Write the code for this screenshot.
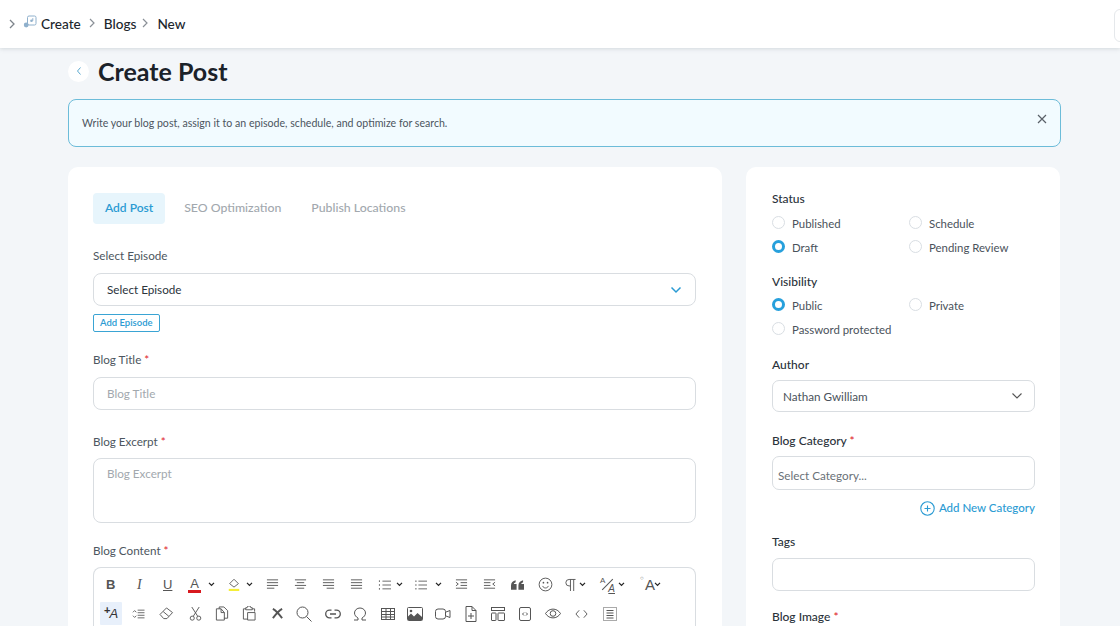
<script>
</script>

<div class="page">
  <header class="top">
    <svg class="crumb-first" width="8" height="10" viewBox="0 0 8 10"><path d="M2 1l4 4-4 4" /></svg>
    <svg class="music" width="14" height="14" viewBox="0 0 14 14"><rect x="4.5" y="1" width="8.5" height="9" rx="1.5"/><circle cx="3.2" cy="10" r="2.4" class="fill"/><circle cx="8.5" cy="5.8" r="1.3" class="fill"/><path d="M9.8 5.8V3.2"/></svg>
    <span class="crumb">Create</span>
    <svg class="sep" width="8" height="10" viewBox="0 0 8 10"><path d="M2 1l4 4-4 4" /></svg>
    <span class="crumb">Blogs</span>
    <svg class="sep s2" width="8" height="10" viewBox="0 0 8 10"><path d="M2 1l4 4-4 4" /></svg>
    <span class="crumb">New</span>
    <div class="top-box"></div>
  </header>

  <main class="content">
    <div class="title-row">
      <button class="back" aria-label="Back"><svg width="8" height="10" viewBox="0 0 8 10"><path d="M5.5 1.5L2.5 5l3 3.5"/></svg></button>
      <h1>Create Post</h1>
    </div>

    <div class="notice">
      <span>Write your blog post, assign it to an episode, schedule, and optimize for search.</span>
      <svg width="10" height="10" viewBox="0 0 10 10"><path d="M1 1l8 8M9 1L1 9"/></svg>
    </div>

    <div class="columns">
      <section class="card left">
        <div class="tabs">
          <span class="tab active">Add Post</span>
          <span class="tab">SEO Optimization</span>
          <span class="tab">Publish Locations</span>
        </div>

        <div class="lbl first">Select Episode</div>
        <div class="field select">
          <span>Select Episode</span>
          <svg width="12" height="8" viewBox="0 0 12 8"><path d="M1.5 1.5L6 6l4.5-4.5"/></svg>
        </div>
        <div class="add-ep">Add Episode</div>

        <div class="lbl title-lbl">Blog Title <i>*</i></div>
        <div class="field ph">Blog Title</div>

        <div class="lbl excerpt-lbl">Blog Excerpt <i>*</i></div>
        <div class="field ph area">Blog Excerpt</div>

        <div class="lbl content-lbl">Blog Content <i>*</i></div>
        <div class="editor">
          <div class="tool-row r1">
            <b class="tb t-b">B</b>
            <em class="tb t-i">I</em>
            <u class="tb t-u">U</u>
            <span class="tb color"><span class="a">A</span><span class="bar red"></span></span>
            <svg class="caret" viewBox="0 0 8 6"><path d="M1 1l3 3 3-3"/></svg>
            <svg class="ic fillbucket" viewBox="0 0 16 16"><path d="M8 2l5 5-5 4-5-4z"/><rect x="2" y="13" width="12" height="2.4" class="yellow"/></svg>
            <svg class="caret c2" viewBox="0 0 8 6"><path d="M1 1l3 3 3-3"/></svg>
            <svg class="ic al a1" viewBox="0 0 14 14"><path d="M1 2h12M1 5h12M1 8h12M1 11h8"/></svg>
            <svg class="ic al" viewBox="0 0 14 14"><path d="M1 2h12M3 5h8M1 8h12M3 11h8"/></svg>
            <svg class="ic al" viewBox="0 0 14 14"><path d="M1 2h12M1 5h12M1 8h12M5 11h8"/></svg>
            <svg class="ic al" viewBox="0 0 14 14"><path d="M1 2h12M1 5h12M1 8h12M1 11h12"/></svg>
            <svg class="ic list" viewBox="0 0 16 14"><path d="M5 2.5h10M5 7h10M5 11.5h10M1.5 1.5v2M1.5 6v2M1.5 10.5v2"/></svg>
            <svg class="caret" viewBox="0 0 8 6"><path d="M1 1l3 3 3-3"/></svg>
            <svg class="ic list ul" viewBox="0 0 16 14"><path d="M5 2.5h10M5 7h10M5 11.5h10M1 2.5h2M1 7h2M1 11.5h2"/></svg>
            <svg class="caret" viewBox="0 0 8 6"><path d="M1 1l3 3 3-3"/></svg>
            <svg class="ic al ind" viewBox="0 0 14 14"><path d="M1 2h12M6 5h7M6 8h7M1 11h12M1 4.5L3.5 6.500 1 8.500"/></svg>
            <svg class="ic al ind2" viewBox="0 0 14 14"><path d="M1 2h12M1 5h7M1 8h7M1 11h12M13 4.500L10.500 6.500 13 8.500"/></svg>
            <svg class="ic quote" viewBox="0 0 14 10"><path d="M0 10V5.500C0 2.500 2 .8 5 0v2C3.800 2.500 3.200 3.200 3 4h3v6zM8 10V5.500C8 2.500 10 .8 13 0v2c-1.200.5-1.800 1.200-2 2h3v6z"/></svg>
            <svg class="ic smile" viewBox="0 0 16 16"><circle cx="8" cy="8" r="6.800"/><path d="M4.800 9.500c.8 1.500 1.900 2.200 3.200 2.200s2.400-.7 3.200-2.200"/><circle cx="5.800" cy="6" r=".9" class="dot"/><circle cx="10.200" cy="6" r=".9" class="dot"/></svg>
            <svg class="ic pil" viewBox="0 0 13 15"><path d="M7 14V1.500M10.500 14V1.500M12.500 1.500H5.500a3.500 3.500 0 0 0 0 7H7"/></svg>
            <svg class="caret" viewBox="0 0 8 6"><path d="M1 1l3 3 3-3"/></svg>
            <span class="tb ratio"><span class="small">A</span><span class="slash"></span><span class="big">A</span></span>
            <svg class="caret" viewBox="0 0 8 6"><path d="M1 1l3 3 3-3"/></svg>
            <span class="tb deg"><span class="sm">○</span>A</span>
            <svg class="caret" viewBox="0 0 8 6"><path d="M1 1l3 3 3-3"/></svg>
          </div>
          <div class="tool-row r2">
            <span class="tb plusa"><span>+</span><em>A</em></span>
            <svg class="ic lh" viewBox="0 0 16 14"><path d="M7 2.500h8M7 5.500h8M7 8.500h8M7 11.500h8M1.500 5L3.500 3l2 2M1.500 9l2 2 2-2"/></svg>
            <svg class="ic eraser" viewBox="0 0 16 14"><path d="M1 8l7-7 6.500 5-6 6.500H5zM4.500 5l6 5"/></svg>
            <svg class="ic cut" viewBox="0 0 14 16"><circle cx="3.500" cy="13" r="2.200"/><circle cx="10.500" cy="13" r="2.200"/><path d="M4.600 11L11 1M9.400 11L3 1"/></svg>
            <svg class="ic copy" viewBox="0 0 14 16"><path d="M4 3V1h5l4 4v8h-4M1 3h5l3.500 4v8H1zM6 3v4h3.500"/></svg>
            <svg class="ic paste" viewBox="0 0 15 16"><path d="M4 3H1.500v11H6M11 3h2.500v3M4 4V1.800h1.500a2 2 0 0 1 4 0H11V4zM6 7h8v8H6z"/></svg>
            <svg class="ic xx" viewBox="0 0 14 14"><path d="M2 2c4 2 7 6 10 10M12 2C8 4 5 8 2 12" /></svg>
            <svg class="ic search" viewBox="0 0 16 16"><circle cx="6.500" cy="6.500" r="5.500"/><path d="M10.500 10.500L15.500 15.500"/></svg>
            <svg class="ic link" viewBox="0 0 16 10"><path d="M6.500 1.200H4.500a3.800 3.800 0 0 0 0 7.600h2M9.500 1.200h2a3.800 3.800 0 0 1 0 7.600h-2M5 5h6"/></svg>
            <svg class="ic omega" viewBox="0 0 14 14"><path d="M1 13h4v-2C3 10 1.500 8 1.500 6a5.500 5 0 0 1 11 0c0 2-1.500 4-3.500 5v2h4"/></svg>
            <svg class="ic table" viewBox="0 0 14 12"><rect x=".5" y=".5" width="13" height="11"/><path d="M.5 3.500h13M.5 6.500h13M.5 9h13M5 .5v11M9.500 .5v11"/></svg>
            <svg class="ic image" viewBox="0 0 16 14"><rect x=".5" y=".5" width="15" height="13" rx="1"/><path class="solid" d="M1 13V9.500l3-3 3 3 3.500-3.500L15 10v3z"/><circle cx="4" cy="4" r="1.300" class="solid"/></svg>
            <svg class="ic video" viewBox="0 0 16 12"><rect x=".5" y="1" width="10" height="10" rx="2.500"/><path d="M11 4l4-1.500v7L11 8"/></svg>
            <svg class="ic doc" viewBox="0 0 12 16"><path d="M7 .5H1v15h10V4.500zM7 .5v4h4M6 7v6M3 10h6"/></svg>
            <svg class="ic layout" viewBox="0 0 14 14"><rect x=".5" y=".5" width="13" height="3"/><rect x=".5" y="6" width="4.500" height="7.500" rx=".5"/><rect x="7" y="6" width="6.500" height="7.500" rx=".5"/></svg>
            <svg class="ic embed" viewBox="0 0 12 14"><rect x=".5" y=".5" width="11" height="13" rx="1.500"/><path d="M5 5.500L3.500 7 5 8.500M7 5.500L8.500 7 7 8.500"/></svg>
            <svg class="ic eye" viewBox="0 0 16 10"><path d="M.5 5C2.500 2 5 .6 8 .6S13.500 2 15.500 5c-2 3-4.500 4.400-7.500 4.400S2.500 8 .5 5z"/><circle cx="8" cy="5" r="2.800"/></svg>
            <svg class="ic code" viewBox="0 0 14 10"><path d="M4.500 1L1 5l3.500 4M9.500 1L13 5 9.500 9"/></svg>
            <svg class="ic blocks" viewBox="0 0 14 14"><rect x=".5" y=".5" width="13" height="13" stroke-dasharray="1 1"/><path d="M3.500 3.500h7M3.500 6h7M3.500 8.500h7M3.500 11h7"/></svg>
          </div>
        </div>
      </section>

      <aside class="card right">
        <div class="rt-lbl">Status</div>
        <div class="radios">
          <label class="radio"><span class="dot"></span>Published</label>
          <label class="radio"><span class="dot"></span>Schedule</label>
          <label class="radio"><span class="dot on"></span>Draft</label>
          <label class="radio"><span class="dot"></span>Pending Review</label>
        </div>
        <div class="rt-lbl vis">Visibility</div>
        <div class="radios vis-radios">
          <label class="radio"><span class="dot on"></span>Public</label>
          <label class="radio"><span class="dot"></span>Private</label>
          <label class="radio wide"><span class="dot"></span>Password protected</label>
        </div>
        <div class="rt-lbl author">Author</div>
        <div class="rfield author-sel">
          <span>Nathan Gwilliam</span>
          <svg width="12" height="8" viewBox="0 0 12 8"><path d="M1.500 1.500L6 6l4.500-4.500"/></svg>
        </div>
        <div class="rt-lbl cat">Blog Category <i>*</i></div>
        <div class="rfield cat-sel">Select Category...</div>
        <div class="add-cat">
          <svg width="15" height="15" viewBox="0 0 15 15"><circle cx="7.500" cy="7.500" r="6.700"/><path d="M7.500 4.500v6M4.500 7.500h6"/></svg>
          Add New Category
        </div>
        <div class="rt-lbl tags">Tags</div>
        <div class="rfield tag-box"></div>
        <div class="rt-lbl img">Blog Image <i>*</i></div>
      </aside>
    </div>
  </main>
</div>

<style>
  :global(body) { margin: 0; background: #f3f6f9; }
  .page { width: 1120px; height: 626px; overflow: hidden; font-family: "Lato", "Inter", sans-serif; color: #212b36; background: #f3f6f9; }
  svg { fill: none; stroke: currentColor; display: block; flex: none; }

  .top { height: 48px; background: #fff; box-shadow: 0 1px 4px rgba(120,130,140,.25); display: flex; align-items: center; position: relative; padding-left: 8px; box-sizing: border-box; }
  .crumb-first { color: #7d848b; stroke-width: 1.300; margin-right: 7px; }
  .music { color: #8fb0cc; margin: -4px 4px 0 0; }
  .music .fill { fill: #8fb0cc; stroke: none; }
  .crumb { font-size: 13.600px; font-weight: 500; color: #20262d; }
  .sep { color: #8a9097; margin: -3px 8px 0 7px; stroke-width: 1.200; }
  .sep.s2 { margin-left: 5px; }
  .top-box { position: absolute; right: -26px; top: 9px; width: 30px; height: 31px; border: 1px solid #e5e8eb; border-radius: 6px; }

  .content { padding: 0 59px 0 68px; }
  .title-row { display: flex; align-items: center; height: 48px; margin-top: -1px; }
  .back { width: 21px; height: 21px; border: 0; padding: 0; border-radius: 50%; background: #fff; display: flex; align-items: center; justify-content: center; color: #5aa9cf; margin: 0 9px 0 0; }
  h1 { margin: 0; font-size: 25px; font-weight: 700; color: #1b2229; line-height: 48px; }

  .notice { height: 48px; box-sizing: border-box; margin: 4px 0 0; border: 1.500px solid #6cbcd9; border-radius: 8px; background: #f2fbff; display: flex; align-items: center; justify-content: space-between; padding: 0 13px 0 13px; font-size: 10.600px; color: #4c5560; }
  .notice span { margin-top: -1px; }
  .notice svg { color: #5a6068; stroke-width: 1.200; margin-top: -9px; }

  .columns { display: flex; gap: 24px; margin-top: 20px; align-items: flex-start; }
  .card { background: #fff; border-radius: 10px; box-sizing: border-box; height: 520px; }
  .left { width: 654px; padding: 26px 26px 0 25px; flex: none; }
  .right { width: 314px; padding: 24px 25px 0 26px; flex: none; }

  .tabs { display: flex; gap: 0; align-items: center; height: 31px; }
  .tab { font-size: 12.300px; font-weight: 500; color: #a2a8ae; margin-right: 30px; line-height: 29px; height: 31px; }
  .tab.active { background: #e7f5fc; color: #2b9bd3; border-radius: 4px; padding: 0 12px; margin-right: 19px; font-weight: 600; font-size: 12px; }

  .lbl { font-size: 11.700px; color: #4d5660; line-height: 16px; }
  .lbl i, .rt-lbl i { color: #e0242b; font-style: normal; }
  .lbl.first { margin-top: 23px; }
  .field { border: 1px solid #d9dde1; border-radius: 8px; box-sizing: border-box; margin-top: 10px; font-size: 11.700px; }
  .select { height: 33px; display: flex; align-items: center; justify-content: space-between; padding: 0 13px; color: #2c343c; }
  .select span { margin-top: -1px; }
  .select svg { color: #2b9bd3; stroke-width: 1.500; }
  .add-ep { display: inline-block; margin-top: 8px; border: 1px solid #3aa4d4; border-radius: 2px; color: #2b9bd3; font-size: 9.500px; font-weight: 600; line-height: 16px; padding: 0 6px; }
  .title-lbl { margin-top: 19px; }
  .ph { height: 33px; color: #a2a8ae; padding: 0 13px; line-height: 30px; }
  .excerpt-lbl { margin-top: 23px; }
  .area { height: 65px; line-height: 16px; padding-top: 6px; margin-top: 9px; }
  .content-lbl { margin-top: 19px; }
  .editor { margin-top: 9px; border: 1px solid #d9dde1; border-bottom: 0; border-radius: 8px 8px 0 0; height: 80px; box-sizing: border-box; padding: 0 5px; color: #555; }

  .tool-row { display: flex; align-items: center; height: 29px; }
  .r1 { margin-top: 2px; }
  .ic { color: #555; stroke-width: 1; }
  .tb { flex: none; }
  .t-b { width: 12px; margin-left: 7px; font: 700 13px "Liberation Sans", sans-serif; color: #555; }
  .t-i { width: 12px; margin-left: 19px; font: italic 14px "Liberation Serif", serif; color: #555; }
  .t-u { width: 12px; margin-left: 14px; font: 13px "Liberation Sans", sans-serif; color: #555; }
  .color { width: 13px; margin-left: 13px; position: relative; height: 16px; font: 13px/14px "Liberation Sans", sans-serif; text-align: center; }
  .bar { position: absolute; left: 0; right: 0; bottom: 0; height: 2.500px; }
  .red { background: #d8191f; }
  .caret { width: 7px; height: 5px; stroke-width: 1.500; color: #222; margin-left: 7px; }
  .c2 { margin-left: 5px; }
  .fillbucket { width: 14px; height: 15px; margin-left: 12px; }
  .yellow { fill: #f5ee35; stroke: none; }
  .al { width: 13px; height: 13px; margin-left: 15px; }
  .al.a1 { margin-left: 13px; }
  .list { width: 14px; height: 12px; margin-left: 15px; }
  .list + .caret { margin-left: 4px; }
  .list.ul { margin-left: 11px; }
  .ul + .caret { margin-left: 7px; }
  .al.ind { margin-left: 13px; }
  .quote { width: 13px; height: 10px; margin-left: 15px; fill: #555; stroke: none; }
  .smile { width: 15px; height: 15px; margin-left: 14px; }
  .dot { fill: #555; stroke: none; }
  .pil { width: 12px; height: 14px; margin-left: 11px; }
  .pil + .caret { margin-left: 3px; }
  .ratio { position: relative; width: 15px; height: 15px; margin-left: 14px; font: 8px "Liberation Sans", sans-serif; }
  .ratio .small { position: absolute; left: 0; top: -1px; }
  .ratio .big { position: absolute; right: 0; bottom: -2px; font-style: italic; font-size: 10px; text-decoration: underline; }
  .ratio .slash { position: absolute; left: 0; top: 7px; width: 15px; height: 1px; background: #555; transform: rotate(-45deg); }
  .ratio + .caret { margin-left: 3px; }
  .deg { margin-left: 15px; font: 15px "Liberation Sans", sans-serif; position: relative; padding-left: 5px; }
  .deg .sm { position: absolute; left: 0; top: -1px; font-size: 6px; }
  .deg + .caret { margin-left: -1px; }

  .plusa { width: 22px; height: 23px; margin-left: 1px; background: #e8f0fb; color: #333; display: flex; align-items: center; justify-content: center; font: 12px "Liberation Sans", sans-serif; border-radius: 1px; }
  .plusa span { font-weight: 700; margin: -7px -1px 0 0; font-size: 11px; }
  .plusa em { font-size: 13px; }
  .lh { width: 15px; height: 12px; margin-left: 9px; }
  .eraser { width: 15px; height: 13px; margin-left: 13px; }
  .cut { width: 13px; height: 15px; margin-left: 15px; }
  .copy { width: 14px; height: 15px; margin-left: 13px; }
  .paste { width: 14px; height: 15px; margin-left: 13px; }
  .xx { width: 13px; height: 13px; margin-left: 15px; stroke-width: 2; }
  .search { width: 16px; height: 16px; margin-left: 12px; }
  .link { width: 16px; height: 10px; margin-left: 13px; stroke-width: 1.300; }
  .omega { width: 14px; height: 14px; margin-left: 12px; }
  .table { width: 14px; height: 12px; margin-left: 14px; }
  .solid { fill: #555; stroke: none; }
  .image { width: 16px; height: 14px; margin-left: 12px; }
  .video { width: 16px; height: 12px; margin-left: 12px; }
  .doc { width: 12px; height: 16px; margin-left: 14px; }
  .layout { width: 14px; height: 14px; margin-left: 14px; }
  .embed { width: 12px; height: 14px; margin-left: 14px; }
  .eye { width: 16px; height: 11px; margin-left: 14px; }
  .code { width: 13px; height: 10px; margin-left: 14px; }
  .blocks { width: 14px; height: 14px; margin-left: 15px; }

  .rt-lbl { font-size: 12px; font-weight: 500; color: #2a323a; line-height: 16px; }
  .radios { display: grid; grid-template-columns: 137px 1fr; margin-top: 4px; }
  .vis-radios { margin-top: 3px; }
  .radio { display: flex; align-items: center; font-size: 11.400px; color: #4a525b; height: 24.500px; white-space: nowrap; }
  .radio .dot { width: 13px; height: 13px; box-sizing: border-box; border-radius: 50%; border: 1px solid #d9dee3; margin: -2px 7px 0 0; background: #fff; flex: none; }
  .radio .dot.on { border: 3px solid #27a0dc; }
  .wide { grid-column: 1 / 3; }
  .vis { margin-top: 14px; }
  .author { margin-top: 15px; }
  .rfield { border: 1px solid #d9dde1; border-radius: 7px; box-sizing: border-box; font-size: 11.700px; color: #4a525b; }
  .author-sel { height: 32px; margin-top: 7px; display: flex; align-items: center; justify-content: space-between; padding: 0 11px 0 10px; }
  .author-sel svg { color: #555; stroke-width: 1.100; }
  .cat { margin-top: 21px; }
  .cat-sel { height: 34px; margin-top: 7px; padding: 0 5px; line-height: 36px; color: #6a7178; }
  .add-cat { display: flex; align-items: center; justify-content: flex-end; gap: 4px; margin-top: 10px; font-size: 11.500px; font-weight: 500; color: #2b9bd3; line-height: 16px; }
  .add-cat svg { stroke-width: 1.100; }
  .tags { margin-top: 18px; }
  .tag-box { height: 33px; margin-top: 8px; }
  .img { margin-top: 18px; }
</style>
